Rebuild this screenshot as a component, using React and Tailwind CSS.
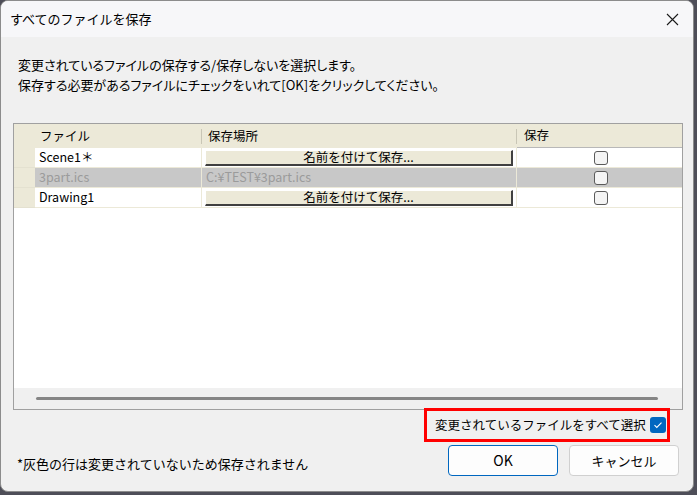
import React from "react";

const jp = { fontFamily: '"Noto Sans CJK JP", "Noto Sans", sans-serif' };

function GridCheck() {
  return <div className="w-[14px] h-[14px] rounded-[3px] border border-[#5a5a5a] bg-[#f4f4f4]" />;
}

function SaveAsButton() {
  return (
    <div className="h-[16px] mx-[3px] bg-[#ece9d8] border-t border-l border-t-white border-l-white border-b-2 border-r-2 border-b-[#404040] border-r-[#404040] flex items-end justify-center text-[12.5px] leading-[14px] text-black">
      名前を付けて保存...
    </div>
  );
}

function Row({ name, location, gray }) {
  const bg = gray ? "bg-[#c8c8c8]" : "bg-white";
  const txt = gray ? "text-[#9b9b9b]" : "text-black";
  return (
    <>
      <div className="bg-[#ece9d8] h-[20px] border-b border-[#e4e1d0]" />
      <div className={`${bg} ${txt} h-[20px] border-b border-r border-[#ece9d8] pl-[4px] flex items-center text-[12.5px]`}>{name}</div>
      <div className={`${bg} ${txt} h-[20px] border-b border-r border-[#ece9d8] flex flex-col justify-center text-[12.5px]`}>
        {location ? <span className="pl-[4px]">{location}</span> : <SaveAsButton />}
      </div>
      <div className={`${bg} h-[20px] border-b border-[#ece9d8] flex items-center justify-center pl-[2px]`}>
        <GridCheck />
      </div>
    </>
  );
}

export default function App() {
  return (
    <div className="w-[697px] h-[495px] bg-[#4e4e58] overflow-hidden" style={jp}>
      <div className="w-[694px] h-[492px] rounded-lg overflow-hidden border border-[#8c8c8c] bg-[#f0f0f0] flex flex-col">
        <div className="h-[36px] shrink-0 bg-[#f7f7f9] flex items-center justify-between pl-[9px] pr-[14px]">
          <span className="text-[13px] text-black">すべてのファイルを保存</span>
          <svg width="13" height="13" viewBox="0 0 13 13" className="mt-[1px]">
            <path d="M1 1 L12 12 M12 1 L1 12" stroke="#1a1a1a" strokeWidth="1.1" />
          </svg>
        </div>

        <div className="flex-1 flex flex-col pl-[12px] pr-[10px]">
          <div className="pt-[18px] pl-[5px] text-[13px] leading-[20px] text-black [font-feature-settings:'palt']">
            <div>変更されているファイルの保存する/保存しないを選択します。</div>
            <div>保存する必要があるファイルにチェックをいれて[OK]をクリックしてください。</div>
          </div>

          <div className="mt-[28px] h-[287px] border border-[#a0a0a0] bg-white flex flex-col">
            <div className="grid grid-cols-[21px_167px_315px_1fr]">
              <div className="bg-[#ece9d8] h-[24px]" />
              <div className="bg-[#ece9d8] h-[24px] flex items-center pl-[5px] text-[12.5px] relative">
                ファイル
                <span className="absolute right-0 top-[5px] h-[15px] w-px bg-[#c9c6b6]" />
              </div>
              <div className="bg-[#ece9d8] h-[24px] flex items-center pl-[6px] text-[12.5px] relative">
                保存場所
                <span className="absolute right-0 top-[5px] h-[15px] w-px bg-[#c9c6b6]" />
              </div>
              <div className="bg-[#ece9d8] h-[24px] flex items-center pl-[7px] text-[12.5px] border-b border-[#b8b8b8]">保存</div>

              <Row name="Scene1＊" />
              <Row name="3part.ics" location="C:¥TEST¥3part.ics" gray />
              <Row name="Drawing1" />
            </div>
            <div className="flex-1 bg-white" />
            <div className="h-[21px] bg-[#f0f0f0] flex items-center pl-[22px] pr-[24px]">
              <div className="h-[3px] w-full rounded-full bg-[#858585]" />
            </div>
          </div>

          <div className="flex justify-end -mt-[2px] pr-[13px]">
            <div className="h-[34px] w-[246px] border-[3px] border-[#ff0000] flex items-center pl-[8px] gap-[4px]">
              <span className="text-[12.5px] text-black whitespace-nowrap">変更されているファイルをすべて選択</span>
              <div className="w-[16px] h-[16px] rounded-[3px] bg-[#0067c0] flex items-center justify-center">
                <svg width="10" height="8" viewBox="0 0 10 8">
                  <path d="M1.5 4.2 L3.8 6.4 L8.5 1.6" stroke="white" strokeWidth="1.1" fill="none" />
                </svg>
              </div>
            </div>
          </div>

          <div className="flex items-center mt-[3px] pr-[4px]">
            <span className="ml-[4px] mt-[6px] text-[13px] text-black flex-1">*灰色の行は変更されていないため保存されません</span>
            <button className="w-[110px] h-[31px] rounded-[4px] border border-[#0067c0] bg-[#fdfdfd] text-[14px] text-black">OK</button>
            <button className="ml-[11px] w-[110px] h-[31px] rounded-[4px] border border-[#d0d0d0] bg-[#fdfdfd] text-[13px] text-black">キャンセル</button>
          </div>
        </div>
      </div>
    </div>
  );
}
